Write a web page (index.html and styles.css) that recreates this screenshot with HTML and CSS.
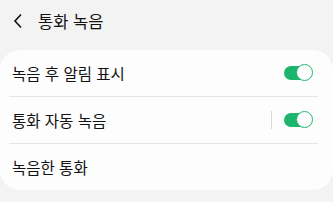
FILE: index.html
```html
<!DOCTYPE html>
<html lang="ko">
<head>
  <meta charset="UTF-8" />
  <meta name="viewport" content="width=device-width, initial-scale=1.0"/>
  <title>통화 녹음</title>
  <link rel="stylesheet" href="styles.css">
</head>
<body>
  <header class="topbar">
    <svg class="back" width="10" height="16" viewBox="0 0 10 16">
      <path d="M8 1.5 L2 8 L8 14.5" fill="none" stroke="#111" stroke-width="1.6"/>
    </svg>
    <h1>통화 녹음</h1>
  </header>

  <div class="card">
    <div class="row">
      <span class="label">녹음 후 알림 표시</span>
      <span class="toggle on"><span class="knob"></span></span>
    </div>
    <div class="row">
      <span class="label">통화 자동 녹음</span>
      <span class="sep"></span>
      <span class="toggle on"><span class="knob"></span></span>
    </div>
    <div class="row">
      <span class="label">녹음한 통화</span>
    </div>
  </div>
</body>
</html>
```

FILE: styles.css
```css
body {
  margin: 0;
  font-family: "Noto Sans CJK KR", "Noto Sans", sans-serif;
  background-color: #f3f3f3;
  color: #121212;
}
.topbar {
  height: 50px;
  display: flex;
  align-items: center;
  padding-left: 13px;
  box-sizing: border-box;
  padding-bottom: 9px;
}
.back {
  margin-right: 15px;
}
.topbar h1 {
  margin: 0;
  font-size: 16.5px;
  font-weight: 400;
}
.card {
  background: #fdfdfd;
  border-radius: 20px;
  padding: 0 15px 0 9px;
}
.row {
  height: 46px;
  display: flex;
  align-items: center;
  padding-left: 3px;
  border-bottom: 1px solid #e6e6e6;
}
.row:last-child {
  border-bottom: none;
}
.label {
  flex: 1;
  font-size: 15.5px;
}
.sep {
  width: 1px;
  height: 18px;
  background: #dadada;
  margin-right: 12px;
}
.toggle {
  position: relative;
  width: 28px;
  height: 14px;
  border-radius: 7px;
  background: #1db46e;
  margin-right: 6px;
}
.knob {
  position: absolute;
  right: -1px;
  top: -2px;
  width: 15px;
  height: 15px;
  border-radius: 50%;
  background: #fff;
  border: 1.5px solid #1db46e;
}
```
